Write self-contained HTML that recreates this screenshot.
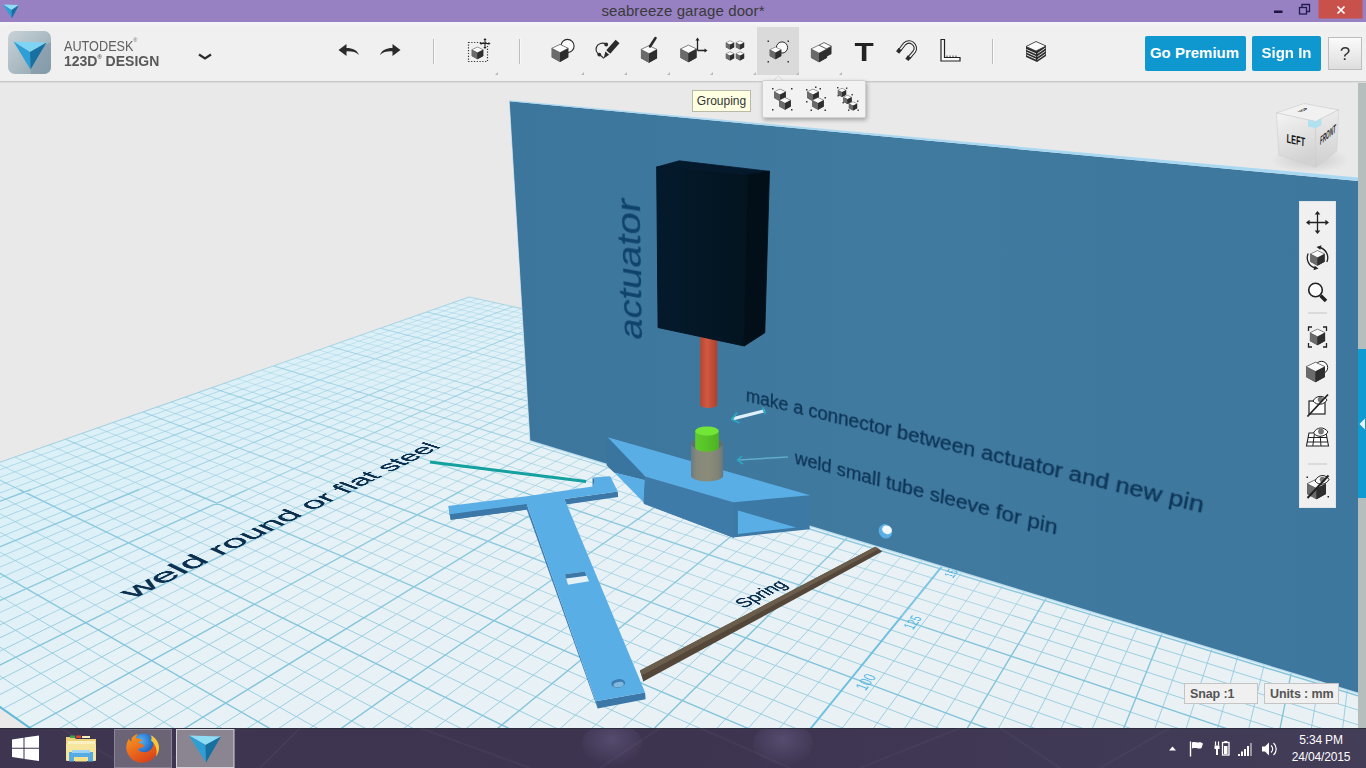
<!DOCTYPE html>
<html lang="en"><head><meta charset="utf-8"><title>seabreeze garage door* - 123D Design</title>
<style>
*{box-sizing:border-box;margin:0;padding:0}
html,body{width:1366px;height:768px;overflow:hidden;background:#e9e9e9;font-family:"Liberation Sans",sans-serif}
#app{position:relative;width:1366px;height:768px;overflow:hidden}
#scene{position:absolute;left:0;top:0;width:1366px;height:768px}
.ptext{-webkit-text-stroke:.3px currentColor;position:absolute;left:0;top:0;white-space:nowrap;transform-origin:0 0;font-family:"Liberation Sans",sans-serif;color:#0d3c63}
#titlebar{position:absolute;left:0;top:0;width:1366px;height:22px;background:#9781c3;color:#3a3a3a;font-size:15px;line-height:21px;text-align:center}
#titlebar .ttl{position:absolute;left:0;width:1366px;top:0;text-align:center;letter-spacing:0.1px}
#toolbar{position:absolute;left:0;top:22px;width:1366px;height:60px;background:linear-gradient(#f6f4f8 0,#f0f0f0 5px);border-bottom:1px solid #c9c9c9;box-shadow:0 1px 0 #dcdcdc}
.brand{position:absolute;left:64px;color:#5b5b5b;white-space:nowrap}
.btn{position:absolute;top:14px;height:35px;background:#0f97cf;color:#fff;font-weight:bold;font-size:15px;line-height:34px;text-align:center;border-radius:2px}
#taskbar{position:absolute;left:0;top:728px;width:1366px;height:40px;background:#3a3246}
.tb-btn{position:absolute;top:1px;height:39px}
.clock{position:absolute;right:5px;top:4px;width:80px;color:#fff;font-size:12px;line-height:17px;letter-spacing:-.15px;text-align:center;font-family:"Liberation Sans",sans-serif}
.status{position:absolute;top:683px;height:21px;background:#f0f0f0;border:1px solid #c4c4c4;color:#4b4b4b;font-weight:bold;font-size:12.5px;line-height:21px;padding-left:5px;letter-spacing:-.1px;color:#555;white-space:nowrap}
#tooltip{position:absolute;z-index:5;left:692px;top:90px;width:59px;height:22px;background:#ffffe1;border:1px solid #b9b9a8;color:#333;font-size:12px;line-height:20px;text-align:center}
#popup{position:absolute;z-index:5;left:762px;top:80px;width:104px;height:38px;background:#f2f2f2;border:1px solid #d0d0d0;border-radius:2px;box-shadow:1px 2px 4px rgba(0,0,0,.3)}
#navbar{position:absolute;left:1299px;top:201px;width:37px;height:307px;background:#f0f0f0;border:1px solid #dfe6ea}
</style></head><body><div id="app">
<div id="viewport" style="position:absolute;left:0;top:0;width:1366px;height:768px;overflow:hidden"><svg id="scene" width="1366" height="768" viewBox="0 0 1366 768">
<defs>
<linearGradient id="gfill" gradientUnits="userSpaceOnUse" x1="470" y1="296" x2="700" y2="728"><stop offset="0" stop-color="#dcf0f8"/><stop offset=".35" stop-color="#e7f2f6"/><stop offset="1" stop-color="#e9f1f5"/></linearGradient>
<linearGradient id="wallg" gradientUnits="userSpaceOnUse" x1="520" y1="0" x2="1360" y2="0"><stop offset="0" stop-color="#3d769c"/><stop offset=".45" stop-color="#417a9f"/><stop offset="1" stop-color="#3e779d"/></linearGradient>
<linearGradient id="rodg" x1="0" x2="1"><stop offset="0" stop-color="#b9452f"/><stop offset=".4" stop-color="#cf5a43"/><stop offset="1" stop-color="#b03f2b"/></linearGradient>
<linearGradient id="pingr" x1="0" x2="1"><stop offset="0" stop-color="#5fcc2d"/><stop offset=".45" stop-color="#58c328"/><stop offset="1" stop-color="#4cb322"/></linearGradient>
<linearGradient id="slv" x1="0" x2="1"><stop offset="0" stop-color="#6c7b82"/><stop offset=".18" stop-color="#86897a"/><stop offset=".55" stop-color="#8b8b78"/><stop offset=".85" stop-color="#7f8376"/><stop offset="1" stop-color="#66757d"/></linearGradient>
<linearGradient id="boxf" x1="0" x2="1"><stop offset="0" stop-color="#041a2c"/><stop offset="1" stop-color="#03141f"/></linearGradient>
<clipPath id="vp"><rect x="0" y="82" width="1358" height="646"/></clipPath>
</defs>
<rect x="0" y="82" width="1366" height="646" fill="#e9e9e9"/>
<g clip-path="url(#vp)">
<polygon points="-232.7,544.4 12290.6,9297.5 12792.8,9297.6 2357.6,714.5 469.2,297" fill="url(#gfill)"/>
<path d="M-4 626.7L21 615M-4 639.6L47.7 615.1M-4 653L74.4 615.1M-4 681.5L127.8 615.1M-4 696.6L154.5 615.1M2.6 708.9L181.2 615.1M15.9 718.1L207.9 615.1M53 732L261.4 615.1M84.4 732L288.1 615.1M115.9 732L314.8 615.1M147.4 732L341.5 615.1M210.3 732L394.9 615.2M241.7 732L421.6 615.2M273.2 732L448.3 615.2M304.6 732L475 615.2M367.5 732L528.4 615.2M399 732L555.1 615.2M430.4 732L581.8 615.2M461.9 732L608.5 615.2M524.8 732L661.9 615.2M556.2 732L688.6 615.2M587.7 732L715.3 615.3M619.1 732L742 615.3M682 732L795.5 615.3M713.5 732L822.2 615.3M744.9 732L848.9 615.3M776.3 732L875.6 615.3M839.2 732L929 615.3M870.7 732L955.7 615.3M902.1 732L982.4 615.3M933.5 732L1009.1 615.3M996.4 732L1062.5 615.4M1027.9 732L1089.2 615.4M1059.3 732L1115.9 615.4M1090.7 732L1142.6 615.4M1153.6 732L1196 615.4M1185 732L1222.7 615.4M1216.5 732L1249.4 615.4M1247.9 732L1276.1 615.4M1310.8 732L1329.6 615.4M1342.2 732L1356.3 615.4M-4 673.2L83.8 732M-4 644.6L131.9 732M-4 618.2L179.9 732M31.7 615.1L228 732M113.4 615.1L324.1 732M154.2 615.1L372.1 732M195.1 615.1L420.2 732M235.9 615.1L468.2 732M317.6 615.1L564.3 732M358.4 615.2L612.4 732M399.3 615.2L660.4 732M440.1 615.2L708.5 732M521.8 615.2L804.5 732M562.6 615.2L852.6 732M603.5 615.2L900.6 732M644.3 615.2L948.6 732M726 615.3L1044.7 732M766.8 615.3L1092.7 732M807.7 615.3L1140.8 732M848.5 615.3L1188.8 732M930.2 615.3L1284.8 732M971 615.3L1332.8 732M1011.9 615.3L1370 728.6M1052.7 615.4L1370 713.7M1134.4 615.4L1370 685.7M1175.2 615.4L1370 672.5M1216.1 615.4L1370 659.7M1256.9 615.4L1370 647.4M1338.6 615.4L1370 624" stroke="#94cbdf" stroke-width="1" fill="none" opacity="0.9"/>
<path d="M-4 667L101.1 615.1M29.5 727.6L234.6 615.1M178.8 732L368.2 615.2M336.1 732L501.7 615.2M493.3 732L635.2 615.2M650.6 732L768.7 615.3M965 732L1035.8 615.4M1122.2 732L1169.3 615.4M1279.3 732L1302.8 615.4M-4 704.2L35.7 732M72.5 615.1L276 732M276.7 615.1L516.3 732M480.9 615.2L756.5 732M685.1 615.2L996.7 732M889.3 615.3L1236.8 732M1093.5 615.4L1370 699.5M1297.7 615.4L1370 635.5" stroke="#84c4da" stroke-width="1.4" fill="none" opacity="1"/>
<path d="M807.8 732L902.3 615.3" stroke="#6fc0e0" stroke-width="1.9" fill="none" opacity="1"/>
<path d="M-4 494.5L9.5 489.5M-4 511.4L52.7 489.5M-4 520.2L74.3 489.5M-4 529.3L95.9 489.5M-4 538.7L117.6 489.5M-4 558.5L160.8 489.5M-4 568.8L182.4 489.5M-4 579.6L204 489.6M-4 590.7L225.6 489.6M-4 614.3L268.9 489.6M21 615L290.5 489.6M47.7 615.1L312.1 489.6M74.4 615.1L333.7 489.6M127.8 615.1L377 489.6M154.5 615.1L398.6 489.6M181.2 615.1L420.2 489.6M207.9 615.1L441.8 489.6M261.4 615.1L485.1 489.6M288.1 615.1L506.7 489.6M314.8 615.1L528.3 489.6M341.5 615.1L549.9 489.7M394.9 615.2L593.2 489.7M421.6 615.2L614.8 489.7M448.3 615.2L636.4 489.7M475 615.2L658 489.7M528.4 615.2L701.2 489.7M555.1 615.2L722.9 489.7M581.8 615.2L744.5 489.7M608.5 615.2L766.1 489.7M661.9 615.2L809.3 489.7M688.6 615.2L831 489.7M715.3 615.3L852.6 489.7M742 615.3L874.2 489.8M795.5 615.3L917.4 489.8M822.2 615.3L939.1 489.8M848.9 615.3L960.7 489.8M875.6 615.3L982.3 489.8M929 615.3L1025.5 489.8M955.7 615.3L1047.1 489.8M982.4 615.3L1068.8 489.8M1009.1 615.3L1090.4 489.8M1062.5 615.4L1133.6 489.8M1089.2 615.4L1155.2 489.8M1115.9 615.4L1176.9 489.8M1142.6 615.4L1198.5 489.9M1196 615.4L1241.7 489.9M1222.7 615.4L1263.3 489.9M1249.4 615.4L1284.9 489.9M1276.1 615.4L1306.6 489.9M1329.6 615.4L1349.5 491.6M1356.3 615.4L1370 501.7M-4 593.8L31.7 615.1M-4 549.9L113.4 615.1M-4 530.2L154.2 615.1M-4 511.7L195.1 615.1M-4 494.4L235.9 615.1M52.3 489.5L317.6 615.1M85.4 489.5L358.4 615.2M118.4 489.5L399.3 615.2M151.5 489.5L440.1 615.2M217.6 489.6L521.8 615.2M250.7 489.6L562.6 615.2M283.7 489.6L603.5 615.2M316.8 489.6L644.3 615.2M382.9 489.6L726 615.3M416 489.6L766.8 615.3M449 489.6L807.7 615.3M482.1 489.6L848.5 615.3M548.2 489.7L930.2 615.3M581.3 489.7L971 615.3M614.3 489.7L1011.9 615.3M647.4 489.7L1052.7 615.4M713.5 489.7L1134.4 615.4M746.6 489.7L1175.2 615.4M779.6 489.7L1216.1 615.4M812.7 489.7L1256.9 615.4M878.8 489.8L1338.6 615.4M911.9 489.8L1370 612.9M944.9 489.8L1370 602.2M978 489.8L1370 591.8M1044.1 489.8L1370 572M1077.2 489.8L1370 562.5M1110.2 489.8L1370 553.3M1143.3 489.8L1370 544.4M1209.4 489.9L1370 527.4M1242.5 489.9L1370 519.3M1275.5 489.9L1370 511.3M1308.6 489.9L1370 503.6" stroke="#94cbdf" stroke-width="1" fill="none" opacity="0.7"/>
<path d="M-4 502.8L31.1 489.5M-4 548.4L139.2 489.5M-4 602.3L247.3 489.6M101.1 615.1L355.4 489.6M234.6 615.1L463.4 489.6M368.2 615.2L571.5 489.7M501.7 615.2L679.6 489.7M635.2 615.2L787.7 489.7M768.7 615.3L895.8 489.8M1035.8 615.4L1112 489.8M1169.3 615.4L1220.1 489.9M1302.8 615.4L1328.2 489.9M-4 571.1L72.5 615.1M19.2 489.5L276.7 615.1M184.5 489.5L480.9 615.2M349.8 489.6L685.1 615.2M515.2 489.6L889.3 615.3M680.5 489.7L1093.5 615.4M845.8 489.7L1297.7 615.4M1011.1 489.8L1370 581.7M1176.4 489.8L1370 535.8M1341.7 489.9L1370 496.2" stroke="#84c4da" stroke-width="1.4" fill="none" opacity="0.9"/>
<path d="M902.3 615.3L1003.9 489.8" stroke="#6fc0e0" stroke-width="1.9" fill="none" opacity="0.9"/>
<path d="M-4 471.1L231.4 386.9M-4 478.7L248.8 387M-4 486.5L266.3 387M9.5 489.5L283.8 387M52.7 489.5L318.7 387M74.3 489.5L336.2 387M95.9 489.5L353.6 387M117.6 489.5L371.1 387M160.8 489.5L406 387M182.4 489.5L423.5 387M204 489.6L440.9 387M225.6 489.6L458.4 387M268.9 489.6L493.3 387M290.5 489.6L510.8 387M312.1 489.6L528.2 387M333.7 489.6L545.7 387M377 489.6L580.6 387.1M398.6 489.6L598.1 387.1M420.2 489.6L615.5 387.1M441.8 489.6L633 387.1M485.1 489.6L667.9 387.1M506.7 489.6L685.4 387.1M528.3 489.6L702.8 387.1M549.9 489.7L720.3 387.1M593.2 489.7L755.2 387.1M614.8 489.7L772.7 387.1M636.4 489.7L790.1 387.1M658 489.7L807.6 387.1M701.2 489.7L842.5 387.1M722.9 489.7L860 387.1M744.5 489.7L877.3 387.2M766.1 489.7L891 390.3M809.3 489.7L918.9 396.4M831 489.7L933.2 399.6M852.6 489.7L947.7 402.8M874.2 489.8L962.4 406M917.4 489.8L992.4 412.7M939.1 489.8L1007.7 416.1M960.7 489.8L1023.3 419.5M982.3 489.8L1039.1 423M1025.5 489.8L1071.4 430.1M1047.1 489.8L1088 433.8M1068.8 489.8L1104.7 437.5M1090.4 489.8L1121.8 441.3M1133.6 489.8L1156.7 449M1155.2 489.8L1174.6 453M1176.9 489.8L1192.8 457M1198.5 489.9L1211.3 461.1M1241.7 489.9L1249.1 469.4M1263.3 489.9L1268.5 473.7M1284.9 489.9L1288.3 478.1M1306.6 489.9L1308.3 482.5M-2.9 463.4L52.3 489.5M14.9 457.1L85.4 489.5M32.2 451L118.4 489.5M49.2 445L151.5 489.5M81.9 433.5L217.6 489.6M97.6 427.9L250.7 489.6M113 422.5L283.7 489.6M128.1 417.2L316.8 489.6M157.2 406.9L382.9 489.6M171.3 402L416 489.6M185 397.1L449 489.6M198.5 392.4L482.1 489.6M236 386.9L548.2 489.7M262.7 387L581.3 489.7M289.4 387L614.3 489.7M316.1 387L647.4 489.7M369.5 387L713.5 489.7M396.3 387L746.6 489.7M423 387L779.6 489.7M449.7 387L812.7 489.7M503.1 387L878.8 489.8M529.8 387L911.9 489.8M556.5 387L944.9 489.8M583.2 387.1L978 489.8M636.6 387.1L1044.1 489.8M663.3 387.1L1077.2 489.8M690 387.1L1110.2 489.8M716.7 387.1L1143.3 489.8M770.1 387.1L1209.4 489.9M796.8 387.1L1242.5 489.9M823.5 387.1L1275.5 489.9M850.2 387.1L1308.6 489.9" stroke="#94cbdf" stroke-width="1" fill="none" opacity="0.6"/>
<path d="M-4 463.7L213.9 386.9M31.1 489.5L301.2 387M139.2 489.5L388.5 387M247.3 489.6L475.8 387M355.4 489.6L563.1 387M463.4 489.6L650.4 387.1M571.5 489.7L737.8 387.1M679.6 489.7L825.1 387.1M787.7 489.7L904.9 393.3M895.8 489.8L977.2 409.3M1112 489.8L1139.1 445.1M1220.1 489.9L1230.1 465.2M1328.2 489.9L1328.8 487M-4 478.2L19.2 489.5M65.7 439.2L184.5 489.5M142.8 412L349.8 489.6M211.7 387.7L515.2 489.6M342.8 387L680.5 489.7M476.4 387L845.8 489.7M609.9 387.1L1011.1 489.8M743.4 387.1L1176.4 489.8M876.9 387.1L1341.7 489.9" stroke="#84c4da" stroke-width="1.1" fill="none" opacity="0.7"/>
<path d="M1003.9 489.8L1055.1 426.5" stroke="#6fc0e0" stroke-width="1.4" fill="none" opacity="0.7"/>
<path d="M231.4 386.9L477.7 298.9M248.8 387L486.3 300.8M266.3 387L495.1 302.7M283.8 387L503.9 304.7M318.7 387L521.9 308.6M336.2 387L531 310.7M353.6 387L540.3 312.7M371.1 387L549.6 314.8M406 387L568.6 319M423.5 387L578.3 321.1M440.9 387L588.1 323.3M458.4 387L598 325.5M493.3 387L618.2 329.9M510.8 387L628.5 332.2M528.2 387L638.9 334.5M545.7 387L649.4 336.8M580.6 387.1L670.9 341.6M598.1 387.1L681.8 344M615.5 387.1L692.9 346.5M633 387.1L704.1 348.9M667.9 387.1L726.9 354M685.4 387.1L738.6 356.6M702.8 387.1L750.4 359.2M720.3 387.1L762.3 361.8M755.2 387.1L786.7 367.2M772.7 387.1L799.1 369.9M790.1 387.1L811.7 372.7M807.6 387.1L824.5 375.5M842.5 387.1L850.5 381.3M860 387.1L863.8 384.3M224.6 383.2L236 386.9M237.2 378.7L262.7 387M249.6 374.4L289.4 387M261.7 370.1L316.1 387M285.2 361.8L369.5 387M296.6 357.8L396.3 387M307.8 353.8L423 387M318.8 350L449.7 387M340.1 342.5L503.1 387M350.5 338.8L529.8 387M360.6 335.2L556.5 387M370.6 331.7L583.2 387.1M390 324.9L636.6 387.1M399.4 321.6L663.3 387.1M408.7 318.3L690 387.1M417.8 315.1L716.7 387.1M435.5 308.9L770.1 387.1M444.1 305.8L796.8 387.1M452.6 302.8L823.5 387.1M461 299.9L850.2 387.1" stroke="#94cbdf" stroke-width="1" fill="none" opacity="0.4"/>
<path d="M213.9 386.9L469.2 297M301.2 387L512.8 306.7M388.5 387L559.1 316.9M475.8 387L608.1 327.7M563.1 387L660.1 339.2M650.4 387.1L715.4 351.4M737.8 387.1L774.4 364.5M825.1 387.1L837.4 378.4M273.6 365.9L342.8 387M329.5 346.2L476.4 387M380.4 328.3L609.9 387.1M426.7 312L743.4 387.1M469.2 297L876.9 387.1" stroke="#84c4da" stroke-width="1.1" fill="none" opacity="0.6"/>
<path d="M-4 704.2L35.7 732" stroke="#62b9d8" stroke-width="2" fill="none"/>
<path d="M430 462.1L586.1 481.5" stroke="#14a09f" stroke-width="3" fill="none"/>
<polygon points="448.5,506.1 449.7,514.2 450.7,519.8 527,509.5 526.7,503.9" fill="#3b78a8"/>
<polygon points="449.7,514.2 450.7,519.8 528,509.6 527,503.9" fill="#3b78a8"/>
<polygon points="564.5,499 617.8,491.6 618.1,496.9 566,504.5" fill="#3b78a8"/>
<polygon points="592.6,477.6 592.6,486.4 594.5,486.2 594.5,479.5" fill="#2f6a98"/>
<polygon points="595.8,701.3 645.1,692.5 645.6,699.2 597.6,708.4" fill="#3b78a8"/>
<polygon points="526.7,503.9 595.8,701.3 597.6,708.4 525.5,506" fill="#3f7fb4"/>
<polygon points="448.5,506.1 526.7,496.2 592.6,486.4 594.5,479.3 592.6,477.6 610.2,476.2 617.8,491.6 564.5,499 645.1,692.5 595.8,701.3 526.7,503.9 449.7,514.2" fill="#5aaee6"/>
<polygon points="565,574.3 584.7,571.6 589.1,581.3 568,584.8" fill="#e4f1f6"/>
<polygon points="565,574.3 584.7,571.6 586.6,575.8 566,578.4" fill="#3b78a8"/>
<ellipse cx="618.2" cy="683.4" rx="7" ry="4.3" fill="#3d7cb0" transform="rotate(-8 618.2 683.4)"/>
<ellipse cx="618.6" cy="684.6" rx="5.2" ry="2.6" fill="#7fb8dc" transform="rotate(-8 618.6 684.6)"/>
<polygon points="640,670.5 875.7,546.6 882.3,551.5 643.3,681.6" fill="#54473a"/>
<polygon points="640,670.5 875.7,546.6 878.8,548.9 641.5,675.6" fill="#6b5d4c"/>
<polygon points="509.2,101.3 1358,181 1358,693.3 529.9,441" fill="url(#wallg)"/>
<polygon points="509.2,101.3 1358,181 1358,177.6 509.6,100.2" fill="#a9d9f2"/>
<path d="M509.2 101.3L529.9 441" stroke="#dfeef6" stroke-width="1" opacity=".7"/>
<path d="M529.9 441L1358 693.3" stroke="#bfe3f3" stroke-width="1.6" opacity=".9"/>
<ellipse cx="885.4" cy="531.3" rx="6.6" ry="7.4" fill="#5aaee6" transform="rotate(-30 885.4 531.3)"/>
<ellipse cx="887" cy="529.8" rx="5" ry="4.2" fill="#f2f8fb" transform="rotate(25 887 529.8)"/>
<polygon points="607.7,437.3 645.4,476.6 645.4,480.6 614.3,472.8 606.7,465.4" fill="#3a75a0"/>
<polygon points="614.3,472.5 645.6,480.3 645.2,504" fill="#5aaee6"/>
<polygon points="645.4,476.6 734,502.4 733.6,537.4 644,503.5" fill="#3f7ba8" stroke="#3f7ba8" stroke-width="1"/>
<polygon points="733.4,502.2 810.2,495.2 809.6,529.2 733,537.4" fill="#3d79a5"/>
<polygon points="737.9,510.4 737.9,533.9 796.1,527.4" fill="#5aaee6"/>
<polygon points="607.7,437.3 645.4,476.6 733.4,502.2 810.2,495.2" fill="#5aaee6"/>
<path d="M691 444 A16.1 5.5 0 0 1 723.2 444 L723.2 475.5 A16.1 6 0 0 1 691 475.5Z" fill="url(#slv)"/>
<ellipse cx="707.1" cy="444" rx="16.1" ry="5.5" fill="#5f6f78"/>
<path d="M695.2 431.1 L695.2 447.5 A11.8 4.2 0 0 0 718.8 447.5 L718.8 431.1Z" fill="url(#pingr)"/>
<ellipse cx="707" cy="431.1" rx="11.8" ry="4.6" fill="#72e636"/>
<path d="M700.2 336 L700.2 405 A8.5 3 0 0 0 717.2 405 L717.2 336Z" fill="url(#rodg)"/>
<polygon points="656.7,167 679.2,160.8 769.5,171.3 748.4,174.6" fill="#05192c" stroke="#05192c" stroke-width=".8"/>
<polygon points="656.7,167 748.4,174.6 744.3,346 658.1,327.5" fill="url(#boxf)" stroke="#041726" stroke-width="1"/>
<polygon points="748.4,174.6 769.5,171.3 764.8,332.8 744.3,346" fill="#030f18" stroke="#030f18" stroke-width=".8"/>
<path d="M733.5 418.6L763.6 411" stroke="#dff0fb" stroke-width="3.2" stroke-linecap="round"/>
<path d="M737 412.5L732 419.5L739.5 423" stroke="#2aa6c6" stroke-width="1.8" fill="none"/>
<path d="M762.5 407.5L765.5 414" stroke="#2aa6c6" stroke-width="1.8" fill="none"/>
<path d="M738 460L788 457" stroke="#63b3cf" stroke-width="1.6" opacity=".9"/>
<path d="M742 456L737.5 460L743 464" stroke="#2aa6c6" stroke-width="1.6" fill="none"/>
</g>
<rect x="1358" y="82" width="8" height="646" fill="#b5bdbd"/>
<rect x="1358" y="349" width="8" height="149" fill="#0f9ad2"/>
<polygon points="1359.5,424 1365,418.5 1365,429.5" fill="#e8f6fc"/>
<defs><linearGradient id="vcl" x1="0" y1="0" x2="0.3" y2="1"><stop offset="0" stop-color="#f4f4f4"/><stop offset="1" stop-color="#d2d2d2"/></linearGradient>
<linearGradient id="vcr" x1="0" y1="0" x2="0" y2="1"><stop offset="0" stop-color="#ececec"/><stop offset="1" stop-color="#cfcfcf"/></linearGradient>
<radialGradient id="vcs" cx=".5" cy=".5" r=".5"><stop offset="0" stop-color="#000" stop-opacity=".13"/><stop offset="1" stop-color="#000" stop-opacity="0"/></radialGradient></defs>
<ellipse cx="1310" cy="160" rx="40" ry="13" fill="url(#vcs)"/>
<polygon points="1276.4,112.9 1303.9,103.5 1338.5,109.9 1315.7,121.6" fill="#f1f1f1" stroke="#c9c9c9" stroke-width=".6"/>
<polygon points="1276.4,112.9 1315.7,121.6 1315.7,167.3 1278.8,155" fill="url(#vcl)" stroke="#cfcfcf" stroke-width=".6"/>
<polygon points="1315.7,121.6 1338.5,109.9 1336.8,150.9 1315.7,167.3" fill="url(#vcr)" stroke="#cfcfcf" stroke-width=".6"/>
<polygon points="1308,119.8 1315.7,121.6 1321.5,118.6 1321.5,125 1315.7,128.5 1308,126.5" fill="#a8dff2" opacity=".85"/>
<text transform="matrix(1 .22 -.03 1 1286.5 142.5)" font-family="Liberation Sans, sans-serif" font-weight="bold" font-size="12.5" textLength="18.5" lengthAdjust="spacingAndGlyphs" fill="#111">LEFT</text>
<text transform="matrix(.75 -.62 0 1 1320 145)" font-family="Liberation Sans, sans-serif" font-weight="bold" font-style="italic" font-size="11.5" textLength="21" lengthAdjust="spacingAndGlyphs" fill="#222">FRONT</text>
<text transform="matrix(.8 -.35 .9 .3 1300.5 112.5)" font-family="Liberation Sans, sans-serif" font-weight="bold" font-size="5" fill="#111">TOP</text>
</svg><div style="position:absolute;left:0;top:82px;width:1358px;height:646px;overflow:hidden"><div style="position:absolute;left:0;top:-82px;width:1366px;height:768px"><div class="ptext" style="font-size:20px;line-height:20px;height:20px;width:433.4px;color:#0b3355;transform:matrix3d(0.50258041,0.020766419,0,-0.00046746376,0.2379522,1.0439417,0,0.00034636419,0,0,1,0,746.16833,385.63808,0,1);">make a connector between actuator and new pin</div>
<div class="ptext" style="font-size:20px;line-height:20px;height:20px;width:264.4px;color:#0b3355;transform:matrix3d(0.50672052,0.020937486,0,-0.00047131459,0.23991238,1.0525413,0,0.00034921743,0,0,1,0,795.16673,448.18443,0,1);">weld small tube sleeve for pin</div>
<div class="ptext" style="font-size:39px;line-height:39px;height:39px;width:142.9px;color:#0f436c;transform:matrix3d(-0.24075432,-1.0562351,0,-0.00035044297,0.50849879,0.021010964,0,-0.00047296861,0,0,1,0,615.26124,335.08665,0,1);">actuator</div>
<div style="position:absolute;left:0;top:0;width:1366px;height:768px;clip-path:polygon(0 82px,509px 82px,529.9px 441px,1358px 693.3px,1358px 728px,0 728px)"><div class="ptext" style="font-size:20px;line-height:20px;height:20px;width:203.2px;color:#0b2f4e;transform:matrix3d(2.1806356,-0.066326635,0,0.0015187008,1.0676786,0.044116049,0,-0.00099307707,0,0,1,0,112.30008,588.41409,0,1);">weld round or flat steel</div>
<div class="ptext" style="font-size:12px;line-height:12px;height:12px;width:36.7px;color:#0b2f4e;transform:matrix3d(2.0824063,-0.045336728,0,0.0010420988,0.38417008,0.052641481,0,-0.0011910184,0,0,1,0,731.37216,600.77839,0,1);">Spring</div>
<div class="ptext" style="font-size:9px;line-height:9px;height:9px;width:17px;color:#4fb6e0;transform:matrix3d(1.8983813,-0.057741538,0,0.0013221252,0.92948188,0.038405817,0,-0.00086453648,0,0,1,0,853.89583,686.80818,0,1);-webkit-text-stroke:0;">100</div>
<div class="ptext" style="font-size:9px;line-height:9px;height:9px;width:17px;color:#4fb6e0;transform:matrix3d(1.7414028,-0.052966842,0,0.0012127977,0.85262233,0.03523001,0,-0.00079304731,0,0,1,0,902.01855,626.40412,0,1);-webkit-text-stroke:0;">125</div>
<div class="ptext" style="font-size:9px;line-height:9px;height:9px;width:17px;color:#4fb6e0;transform:matrix3d(1.6084027,-0.048921496,0,0.00112017,0.7875031,0.032539307,0,-0.00073247815,0,0,1,0,942.7905,575.22681,0,1);-webkit-text-stroke:0;">150</div></div></div></div></div>
<div id="tooltip">Grouping</div>
<div id="popup"><svg width="104" height="38" viewBox="0 0 104 38" style="position:absolute;left:-1px;top:-1px">
<g><use href="#cube" transform="translate(18,15) scale(.5)"/><use href="#cube" transform="translate(23,23.500) scale(.5)"/><g fill="#333"><rect x="10" y="8" width="1.500" height="1.500"/><rect x="29" y="8" width="1.500" height="1.500"/><rect x="10" y="29" width="1.500" height="1.500"/><rect x="29" y="29" width="1.500" height="1.500"/></g></g>
<g transform="translate(33,0)"><use href="#cube" transform="translate(18,15) scale(.5)"/><use href="#cube" transform="translate(23,23.500) scale(.5)"/><g fill="#333"><rect x="11" y="9" width="1.500" height="1.500"/><rect x="24.500" y="8" width="1.500" height="1.500"/><rect x="11" y="21" width="1.500" height="1.500"/><rect x="29.500" y="17" width="1.500" height="1.500"/><rect x="15.500" y="29.500" width="1.500" height="1.500"/><rect x="29.500" y="29.500" width="1.500" height="1.500"/><rect x="20" y="6.500" width="1.500" height="1.500"/></g></g>
<g transform="translate(66,0)"><use href="#cube" transform="translate(14,12.500) scale(.36)"/><use href="#cube" transform="translate(19.500,19.500) scale(.36)"/><use href="#cube" transform="translate(25,26) scale(.36)"/><g fill="#333"><rect x="9" y="7" width="1.400" height="1.400"/><rect x="18" y="7.500" width="1.400" height="1.400"/><rect x="9.500" y="15" width="1.400" height="1.400"/><rect x="14.500" y="22" width="1.400" height="1.400"/><rect x="23.500" y="14" width="1.400" height="1.400"/><rect x="20" y="29.500" width="1.400" height="1.400"/><rect x="29" y="20.500" width="1.400" height="1.400"/><rect x="29.500" y="29.500" width="1.400" height="1.400"/></g></g>
</svg></div>
<div id="navbar"><svg width="37" height="307" viewBox="0 0 37 307" style="position:absolute;left:-1px;top:-1px">
<g stroke="#222" stroke-width="1.3" fill="none"><path d="M18.5 12.5V30.5M9.5 21.5H27.5"/></g>
<g fill="#222"><path d="M18.5 10l2.8 3.6h-5.6zM18.500 33l2.8-3.600h-5.600zM7 21.500l3.600-2.800v5.600zM30 21.500l-3.600-2.800v5.600z"/></g>
<use href="#cube" transform="translate(18.500,57) scale(.62)"/>
<g stroke="#222" stroke-width="1.300" fill="none"><path d="M9.200 52.500a10.500 10.500 0 0 0 7 14.500M27.800 61a10.500 10.500 0 0 0-7-14.500"/></g>
<path d="M19.500 67.500l-5 1.800 1.200-4.600zM17.500 46l5-1.800-1.200 4.600z" fill="#222"/>
<circle cx="16.500" cy="89" r="6.800" fill="#fff" stroke="#222" stroke-width="1.600"/><path d="M21.500 94.500l5.500 5.500" stroke="#222" stroke-width="3.600" stroke-linecap="butt"/>
<path d="M9 112h19" stroke="#c4c4c4" stroke-width="1"/>
<use href="#cube" transform="translate(18.500,136) scale(.66)"/>
<g stroke="#222" stroke-width="1.300" fill="none"><path d="M13 126h-3.500v4M24 126h3.500v4M13 146h-3.500v-4M24 146h3.500v-4"/></g>
<circle cx="22.500" cy="166.500" r="6.200" fill="#fff" stroke="#222" stroke-width="1"/><use href="#cube" transform="translate(16.500,171) scale(.82)"/>
<rect x="10" y="200" width="16" height="13" fill="#fff" stroke="#222" stroke-width="1.200"/><path d="M14 200c3-6 11-6 14-1c-3 5-10 6-14 1z" fill="#fff" stroke="#222" stroke-width="1"/><circle cx="21.500" cy="198.500" r="2.800" fill="#777"/><path d="M8.500 215.500L29 193.500" stroke="#222" stroke-width="1.800"/>
<g transform="translate(0,3)"><path d="M10 229h17l2.500 13h-22z" fill="#fff" stroke="#222" stroke-width="1.100"/><path d="M9 233.500h19M8.200 238h20.500M15.500 229l-1.700 13M21 229l1 13" stroke="#222" stroke-width="1" fill="none"/><path d="M14.500 229c3-6.500 11-6.500 14.500-1c-3.500 5-10.500 6-14.500 1z" fill="#fff" stroke="#222" stroke-width="1"/><circle cx="22" cy="227.500" r="2.900" fill="#777"/></g>
<path d="M9 263h19" stroke="#c4c4c4" stroke-width="1"/>
<use href="#cube" transform="translate(17.500,288) scale(.82)"/><path d="M16 280c3-7 11-7 14-1.500c-3 5.500-10 6.500-14 1.500z" fill="#fff" stroke="#222" stroke-width="1"/><circle cx="23.500" cy="278.500" r="2.800" fill="#777"/><path d="M8.500 297L29.500 274.500" stroke="#222" stroke-width="2"/><rect x="7.500" y="275.500" width="1.500" height="1.500" fill="#222"/><rect x="28.500" y="295" width="1.500" height="1.500" fill="#222"/>
</svg></div>
<div class="status" style="left:1184px;width:74px">Snap :1</div>
<div class="status" style="left:1264px;width:75px">Units : mm</div>
<div id="toolbar">
<svg width="1366" height="60" viewBox="0 22 1366 60" style="position:absolute;left:0;top:0">
<defs>
<g id="cube"><path d="M0-12L11.500-6.500V6L0 12.500L-11.500 6V-6.500z" fill="#3a3a3a"/><path d="M0-12L11.500-6.500L0-.5L-11.500-6.500z" fill="#fafafa" stroke="#4a4a4a" stroke-width=".8"/><path d="M-11.500-6.500L0-.5V12.500L-11.500 6z" fill="#6b6b6b"/><path d="M0-.5L11.500-6.500V6L0 12.500z" fill="#2e2e2e"/></g>
<path id="dd" d="M0 0l3-3v3z" fill="#b8b8b8"/>
<linearGradient id="logobg" x1="0" y1="0" x2="1" y2="1"><stop offset="0" stop-color="#c9d3d8"/><stop offset="1" stop-color="#8fa3af"/></linearGradient>
</defs>
<rect x="757" y="27" width="42" height="48" fill="#dadada"/>
<!-- logo -->
<rect x="8" y="31" width="43" height="43" rx="7" fill="url(#logobg)"/>
<path d="M30 52L51 42V66.500q0 7.500-7.500 7.500H31z" fill="#7a94a5" opacity=".55"/>
<path d="M13.500 41.500L46.500 42.500L30 52z" fill="#7fd4f3"/><path d="M13.500 41.500L30 52L30.500 69.500z" fill="#2b9fd6"/><path d="M46.500 42.500L30 52L30.500 69.500z" fill="#17709f"/>
<!-- chevron -->
<path d="M199 54.500l6 4 6-4" stroke="#2b2b2b" stroke-width="2.200" fill="none"/>
<!-- undo / redo -->
<path d="M338.500 50l8-6v4c6.500 0 10.500 2 12.500 7c-3-3-7-3.800-12.500-3.600v4.600z" fill="#2b2b2b"/>
<path d="M400.500 50l-8-6v4c-6.500 0-10.500 2-12.500 7c3-3 7-3.800 12.500-3.600v4.600z" fill="#2b2b2b"/>
<path d="M433.500 39v25M519.500 39v25M992.500 39v25" stroke="#bdbdbd" stroke-width="1"/>
<path d="M434.500 39v25M520.500 39v25M993.500 39v25" stroke="#fafafa" stroke-width="1"/>
<!-- transform -->
<rect x="468.500" y="42.500" width="19" height="19" fill="none" stroke="#333" stroke-width="1.200" stroke-dasharray="1.200 1.600"/>
<use href="#cube" transform="translate(477.500,53) scale(.5)"/>
<path d="M485 39.500v8M481 43.500h8" stroke="#222" stroke-width="1.100"/><path d="M485 38l1.600 2h-3.200zM485 49l1.600-2h-3.200zM479.500 43.500l2-1.600v3.200zM490.500 43.500l-2-1.600v3.200z" fill="#222"/>
<!-- primitives -->
<circle cx="567.500" cy="46" r="6.600" fill="#fafafa" stroke="#2b2b2b" stroke-width="1.100"/><use href="#cube" transform="translate(560,53) scale(.72)"/>
<!-- sketch -->
<path d="M606.200 44.300c-3.500-2.200-8.500-1-9.800 3c-1 3.200 .5 5.800 2.800 7.300c1.500 1 3 2.200 4.600 3.800" stroke="#2b2b2b" stroke-width="1.200" fill="none"/><circle cx="606.200" cy="44.500" r="1.900" fill="#2b2b2b"/><circle cx="599.300" cy="54.600" r="1.900" fill="#2b2b2b"/><path d="M615.600 39.800l3.900 3.500l-9.300 10.500l-3.900-3.500z" fill="#2b2b2b"/><path d="M605.400 51.400l3.800 3.400l-5.600 3.600z" fill="#2b2b2b"/>
<!-- construct -->
<use href="#cube" transform="translate(649,54) scale(.7)"/><path d="M650 46.500l5.500-8.500" stroke="#2b2b2b" stroke-width="2.600" stroke-linecap="round"/>
<!-- modify -->
<use href="#cube" transform="translate(688.500,53.500) scale(.7)"/><path d="M697.500 50.500v-10.500M697.500 50.500h8" stroke="#222" stroke-width="1.300" fill="none"/><path d="M697.500 37.500l2 3h-4zM707.500 50.500l-3-2v4z" fill="#222"/>
<!-- pattern -->
<use href="#cube" transform="translate(730,45) scale(.36)"/><use href="#cube" transform="translate(740,45) scale(.36)"/><use href="#cube" transform="translate(730,56) scale(.36)"/><use href="#cube" transform="translate(740,56) scale(.36)"/>
<!-- grouping -->
<circle cx="782" cy="47.500" r="5.600" fill="#fafafa" stroke="#2b2b2b" stroke-width="1"/><use href="#cube" transform="translate(775.500,53) scale(.5)"/><g fill="#333"><rect x="767.500" y="40.500" width="1.500" height="1.500"/><rect x="787.500" y="40.500" width="1.500" height="1.500"/><rect x="767.500" y="61" width="1.500" height="1.500"/><rect x="787.500" y="61" width="1.500" height="1.500"/></g>
<!-- combine -->
<use href="#cube" transform="translate(819,53.500) scale(.7)"/><path d="M819 45.200l5-2.600l7.500 3.600v7.800l-5 2.800v-8z" fill="#2e2e2e"/><path d="M819 45.200l5-2.600l7.500 3.600l-5 2.600z" fill="#fafafa" stroke="#4a4a4a" stroke-width=".7"/>
<!-- T -->
<text transform="translate(864,61) scale(1.22,1)" text-anchor="middle" font-family="Liberation Sans, sans-serif" font-weight="bold" font-size="25.800" fill="#222">T</text>
<!-- magnet -->
<path d="M899.500 50.500l5-6.500a6.200 6.200 0 0 1 9.800 7.500l-5.500 6.500" stroke="#2b2b2b" stroke-width="3.600" fill="none"/><path d="M899.500 50.500l5-6.500a6.200 6.200 0 0 1 9.800 7.500l-5.500 6.500" stroke="#f4f4f4" stroke-width="1.500" fill="none"/><path d="M897.300 49.600l3.200 2.400M906.600 57l3.200 2.400" stroke="#2b2b2b" stroke-width="4.200"/>
<!-- ruler -->
<path d="M941 39.500h3.500v18h15.500v3.500h-19z" fill="#fafafa" stroke="#222" stroke-width="1.200"/><path d="M947 57.500v-2M950 57.500v-2M953 57.500v-2M956 57.500v-2" stroke="#222" stroke-width=".8"/>
<!-- material -->
<path d="M1026 46.500l10-5l10 4.500v10l-9 6l-11-5z" fill="#2b2b2b"/><path d="M1026 46.500l10-5l10 4.500l-10 5z" fill="#fafafa" stroke="#333" stroke-width=".8"/><path d="M1026.500 49.500l9.500 4.300M1026.500 52.200l9.500 4.300M1026.500 54.900l9.500 4.300M1037.500 53.500l8-5.500M1037.500 56.500l8-5.500M1037.500 59.500l8-5.500" stroke="#f0f0f0" stroke-width=".9"/>
<!-- dropdown marks -->
<use href="#dd" x="495" y="75"/><use href="#dd" x="581" y="75"/><use href="#dd" x="624" y="75"/><use href="#dd" x="667" y="75"/><use href="#dd" x="710" y="75"/><use href="#dd" x="753" y="75"/><use href="#dd" x="796" y="75"/><use href="#dd" x="839" y="75"/>
<path d="M772 82l6.500-6 6.500 6z" fill="#f2f2f2" stroke="#cfcfcf" stroke-width=".8"/>
</svg>
<div class="brand" style="top:15px;font-size:15px;transform-origin:0 0;transform:scaleX(.845);color:#606060">AUTODESK<span style="font-size:6px;vertical-align:top;position:relative;top:0px">®</span></div>
<div class="brand" style="top:30.500px;font-size:14.500px;font-weight:bold;color:#585858;transform-origin:0 0;transform:scaleX(.965)">123D<span style="font-size:6px;vertical-align:top;position:relative;top:1px">®</span> DESIGN</div>
<div class="btn" style="left:1145px;width:101px;padding-right:2px">Go Premium</div>
<div class="btn" style="left:1252px;width:69px">Sign In</div>
<div style="position:absolute;left:1328px;top:15px;width:34px;height:33px;border:1px solid #bdbdbd;background:linear-gradient(#fafafa,#dedede);color:#333;font-size:19px;line-height:31px;text-align:center">?</div>
</div>
<div id="titlebar"><div class="ttl">seabreeze garage door*</div>
<svg width="1366" height="22" viewBox="0 0 1366 22" style="position:absolute;left:0;top:0">
<path d="M3 4.500L19 5L11.500 10z" fill="#8fdcf5"/><path d="M3 4.500L11.500 10L11.800 18.500z" fill="#2b9fd6"/><path d="M19 5L11.500 10L11.800 18.500z" fill="#17709f"/>
<rect x="1274" y="10.500" width="8.500" height="2.500" fill="#1e1640"/>
<rect x="1299.500" y="7.500" width="7" height="6.500" fill="none" stroke="#241a4d" stroke-width="1.300"/><path d="M1302 7v-2.500h7.500v7h-2.500" fill="none" stroke="#241a4d" stroke-width="1.300"/>
<rect x="1318.500" y="0" width="44" height="18.500" fill="#c9514c"/><path d="M1337.500 6.500l7 7M1344.500 6.500l-7 7" stroke="#fff" stroke-width="1.700"/>
</svg></div>
<div id="taskbar">
<svg width="1366" height="40" viewBox="0 728 1366 40" style="position:absolute;left:0;top:0">
<defs><linearGradient id="tbg" x1="0" x2="1"><stop offset="0" stop-color="#3e3551"/><stop offset=".5" stop-color="#3d3450"/><stop offset="1" stop-color="#433d58"/></linearGradient></defs>
<rect x="0" y="728" width="1366" height="40" fill="url(#tbg)"/>
<radialGradient id="paw" cx=".5" cy=".4" r=".6"><stop offset="0" stop-color="#7c70a0" stop-opacity=".38"/><stop offset="1" stop-color="#7c70a0" stop-opacity="0"/></radialGradient><ellipse cx="612" cy="744" rx="30" ry="22" fill="url(#paw)"/><ellipse cx="783" cy="744" rx="30" ry="22" fill="url(#paw)"/><rect x="0" y="728" width="1366" height="1" fill="#2c2c3c"/><g stroke="#fff" stroke-opacity=".035" stroke-width="2"><path d="M60 728l70 40M150 768l90-40M300 728l-40 40M420 728l110 40M600 768l60-40M700 728l90 40M860 768l100-40M1000 728l60 40M1100 768l70-40"/></g>
<!-- windows logo -->
<path d="M12 739.500l11.500-1.700v10h-11.500zM24.500 737.600l14.500-2.100v12.300h-14.500zM12 748.800h11.500v10l-11.500-1.700zM24.500 748.800h14.500v12.300l-14.500-2.100z" fill="#fff"/>
<!-- explorer -->
<path d="M66 737h8l2 2h20v21h-30z" fill="#ecd27a"/><rect x="67.500" y="741" width="27.500" height="18" fill="#fbf0bf"/><rect x="66" y="744" width="30" height="17" rx="1" fill="#f6e59c"/><rect x="70" y="735.500" width="5" height="2.500" fill="#3fa34d"/><rect x="76" y="735.500" width="5" height="2.500" fill="#d9432f"/><rect x="82" y="736" width="8" height="2" fill="#f7f0c0"/>
<path d="M69 752h24v9.500h-5v-4.500h-14v4.500h-5z" fill="#56abe4"/><rect x="72" y="750" width="18" height="3" fill="#9ed2f2"/><rect x="75" y="757" width="12" height="4.500" fill="#f3e08a"/>
<!-- firefox button -->
<rect x="114.500" y="729.500" width="57" height="38" fill="#6b6476" stroke="#8a8496" stroke-width="1"/>
<radialGradient id="ffg" cx=".35" cy=".3" r=".8"><stop offset="0" stop-color="#58b4f0"/><stop offset=".5" stop-color="#2a78cf"/><stop offset="1" stop-color="#14377f"/></radialGradient>
<linearGradient id="fff" x1="0" y1="0" x2=".6" y2="1"><stop offset="0" stop-color="#f6a21f"/><stop offset=".55" stop-color="#ec6a1c"/><stop offset="1" stop-color="#d9441a"/></linearGradient>
<circle cx="144" cy="746" r="12.500" fill="url(#ffg)"/>
<path d="M131.500 738.500c1.500-2.500 4-4 6.500-4.500c-1.500 1.500-2 3-2 4.500c2.500-.5 5 .5 6.500 2.500c-2-.2-3.500.5-4.300 2c2.500 0 5.300 1 6.300 3.500c-2.500 1-4.500 1-6.500 3c2 2.700 6.500 3.500 10 2c3.500-1.500 5.500-5 5.500-8.500c0-3-1.500-6-4-8c4.500 1.500 8 6 8.500 11c.6 6-2.500 11.500-7.500 14.500c-5 3-11.500 3-16.500 0c-5.500-3.300-8.500-9.500-7.500-15.500c.3-2.300 1.300-4.500 2.500-6.500c.3 1.500 1 2.500 2.500 3z" fill="url(#fff)"/>
<path d="M151 735.500c4.500 2 7.800 6.500 8 11.500c.2 3.500-1 7-3 9.500c1-3.500 .8-7.500-.8-10.800c-1-2-2.500-3.800-4.200-5.200c.8-1.500.8-3.500 0-5z" fill="#f8c63a"/>
<!-- 123d button -->
<rect x="176.500" y="729.500" width="57.500" height="38" fill="#8a8591" stroke="#d5d2da" stroke-width="1"/>
<path d="M189 735.500L221 736.500L205.500 745z" fill="#8fdcf5"/><path d="M189 735.500L205.500 745L206 762.500z" fill="#2b9fd6"/><path d="M221 736.500L205.500 745L206 762.500z" fill="#17709f"/>
<!-- tray -->
<path d="M1169 750.500l3.500-4 3.500 4z" fill="#fff"/>
<path d="M1190.500 741.500v15" stroke="#fff" stroke-width="1.400"/><path d="M1192 742.500c3-1.500 5 1 8-.5l3 1.500l-1.500 4.500c-3 1.500-5-1-9.500 .5z" fill="#fff"/>
<rect x="1222.500" y="742.500" width="6.500" height="12.500" fill="none" stroke="#fff" stroke-width="1.300"/><rect x="1224.300" y="741" width="3" height="1.500" fill="#fff"/><rect x="1224" y="746" width="3.500" height="8" fill="#fff"/><path d="M1215.500 741.500v4M1218.500 741.500v4" stroke="#fff" stroke-width="1.200"/><path d="M1214.500 745.500h5v3.500h-1.500v6h-2v-6h-1.500z" fill="#fff"/>
<path d="M1238 756h2v-2h-2zM1241 756h2v-4.500h-2zM1244 756h2v-7h-2zM1247 756h2v-10h-2z" fill="#fff"/><path d="M1250 756h2v-13h-2z" fill="#9a95a2"/>
<path d="M1262 746.500h3l4-4v13l-4-4h-3z" fill="#fff"/><path d="M1271 745.500a4.500 4.500 0 0 1 0 7M1273.500 743a8 8 0 0 1 0 12" stroke="#fff" stroke-width="1.200" fill="none"/>
</svg>
<div class="clock">5:34 PM<br>24/04/2015</div>
</div>

</div></body></html>
